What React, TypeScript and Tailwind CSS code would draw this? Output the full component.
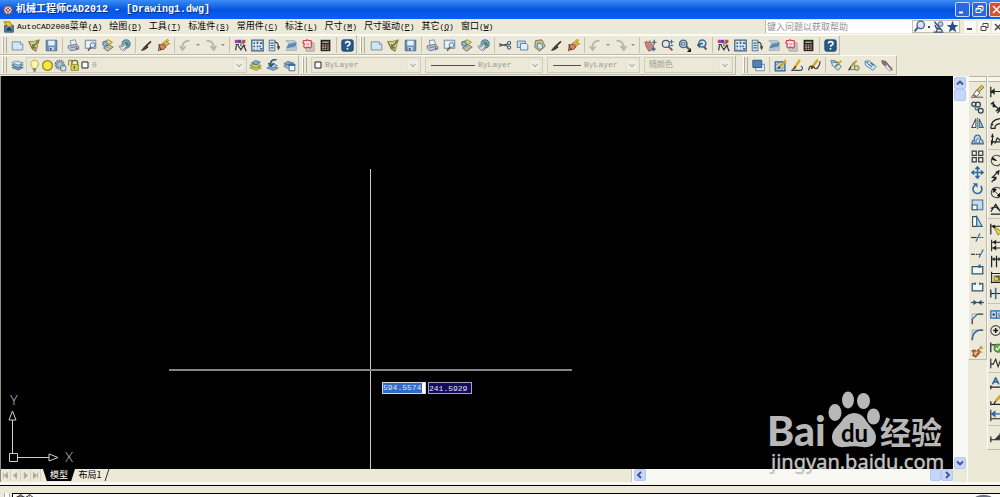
import React from "react";

interface MenuItem {
  name: string;
  latin?: string;
  hotkey: string;
}

const menus: MenuItem[] = [
  { latin: "AutoCAD2008", name: "菜单", hotkey: "A" },
  { name: "绘图", hotkey: "D" },
  { name: "工具", hotkey: "T" },
  { name: "标准件", hotkey: "S" },
  { name: "常用件", hotkey: "C" },
  { name: "标注", hotkey: "L" },
  { name: "尺寸", hotkey: "M" },
  { name: "尺寸驱动", hotkey: "P" },
  { name: "其它", hotkey: "Q" },
  { name: "窗口", hotkey: "W" },
];

// every icon is drawn on a 16x16 grid
const icons: Record<string, React.ReactNode> = {
  newFile: (
    <>
      <path d="M1.5 3.5h10l3 3v7h-13z" fill="#d3e5f5" stroke="#5d7f9e" />
      <path d="M11.5 3.5v3h3" fill="#fff" stroke="#5d7f9e" />
    </>
  ),
  open: (
    <>
      <path d="M1 3l6 0 7-2-2 6-2 8-5-3z" fill="#e0cb7c" stroke="#8a7a38" />
      <path d="M13 2L7 9M6 6v5h4" stroke="#3e6b42" strokeWidth="1.5" fill="none" />
      <path d="M1 3l4 9 5 3" stroke="#6c6440" fill="none" />
    </>
  ),
  save: (
    <>
      <path d="M1.500 1.500h13v13h-13z" fill="#6a93bd" stroke="#3c628a" />
      <path d="M4 2h8v6H4z" fill="#e6eef6" />
      <path d="M5 10h6v4H5z" fill="#c9d7e4" />
      <path d="M6 11h2v3H6z" fill="#2f4e70" />
    </>
  ),
  print: (
    <>
      <path d="M4 2l6-1 2 6-7 1z" fill="#eef3f8" stroke="#6d7d92" />
      <path d="M1.500 8.500l10-2 3 3v3l-10 2-3-3z" fill="#c0cad8" stroke="#56657c" />
      <path d="M4 11l9-2" stroke="#56657c" />
      <circle cx="12" cy="11.500" r="1" fill="#536" />
    </>
  ),
  preview: (
    <>
      <path d="M1.500 1.500h13v10h-13z" fill="#c8dcef" stroke="#5d7f9e" />
      <path d="M3 3h7v7H3z" fill="#edf5fc" />
      <circle cx="10.500" cy="7.500" r="3" fill="#dcecf8" stroke="#43688c" />
      <path d="M8.500 10L5 14.500" stroke="#7d5548" strokeWidth="2" />
    </>
  ),
  publish: (
    <>
      <path d="M2 4l7-3 5 3-6 4z" fill="#e9d66b" stroke="#8b7c32" />
      <circle cx="5" cy="6" r="3" fill="#8db5da" stroke="#3f678e" />
      <path d="M3 11l7-4 5 3-7 5z" fill="#b9cfe3" stroke="#44617f" />
      <path d="M5 12l5-3M9 13l5-4" stroke="#d1a631" strokeWidth="1.500" />
    </>
  ),
  globe: (
    <>
      <circle cx="10" cy="6" r="5" fill="#79a9d0" stroke="#3e648a" />
      <path d="M8 3l4 1 2 4-4 2z" fill="#4e8a62" />
      <path d="M1 9l7-3 3 3-6 5z" fill="#e3e7ea" stroke="#72808c" />
      <path d="M3 10l5-2M7 15l4-4" stroke="#59626c" />
    </>
  ),
  brush: (
    <>
      <path d="M13.500 3L7 9" stroke="#33302b" strokeWidth="2" />
      <path d="M8 8l2 2-4 3-4 1 3-4z" fill="#5a3c2c" stroke="#2f211a" />
    </>
  ),
  match: (
    <>
      <path d="M14 1L9 5l4 1-5 4" stroke="#8f6d16" strokeWidth="3" fill="none" />
      <path d="M14 1L9 5l4 1-5 4" stroke="#edc53a" strokeWidth="1.500" fill="none" />
      <path d="M2 7h6l3 3-3 3H5z" fill="#d98a6c" stroke="#703222" />
      <path d="M3 8l-1 7M5 11l-1 3" stroke="#703222" strokeWidth="1.500" />
    </>
  ),
  undo: (
    <path d="M13 2C7 2 4 5 4 11M1 8.500l3.500 5L8 9" fill="none" stroke="#b5b4ac" strokeWidth="2.200" />
  ),
  redo: (
    <path d="M3 2c6 0 9 3 9 9M8 8.500l4 5 3-5" fill="none" stroke="#b5b4ac" strokeWidth="2.200" />
  ),
  props: (
    <>
      <path d="M1 1h4v4H1z" fill="#c2359c" />
      <path d="M5 1h4v4H5z" fill="#4348b4" />
      <path d="M10 1h4v4h-4z" fill="#c74641" />
      <path d="M2 7h4M3 8l-1 6M5 8l4 6M8 8h6M12 8l-4 6M12 8l3 7" stroke="#33373d" strokeWidth="1.500" />
      <circle cx="10" cy="7" r="2" fill="#dca" stroke="#554" />
    </>
  ),
  design: (
    <>
      <path d="M1 1.500h14v13H1z" fill="#e2edf6" stroke="#355f86" strokeWidth="1.500" />
      <path d="M4 4v2M4 8v2M4 12v1M8 3v3M8 8v2M8 12v1M11 5h3M11 8v2M11 12h3" stroke="#355f86" strokeWidth="2" />
    </>
  ),
  palettes: (
    <>
      <path d="M1.500 1.500h7v13h-7z" fill="#dceaf5" stroke="#355f86" />
      <path d="M3 5h4M3 8h4M3 11h4" stroke="#355f86" strokeWidth="1.500" />
      <path d="M8 4c4-1 5 3 5 8" fill="none" stroke="#333e4c" strokeWidth="1.500" />
      <path d="M11 9l2 5 2-5z" fill="#333e4c" />
    </>
  ),
  sheets: (
    <>
      <path d="M1 2h11l2 3H4z" fill="#c2d4e2" stroke="#93aabb" />
      <path d="M4 6l10-2v5L1 12z" fill="#5e8bb2" />
      <path d="M1 14l13-5v5z" fill="#c3ced4" stroke="#9aabb7" />
    </>
  ),
  markup: (
    <>
      <path d="M5 5h10v10H5z" fill="#cdc6c0" stroke="#a3a1a0" />
      <path d="M2 2h3l1-1 2 1h3l1 2-1 2 1 3-2 2-3-1-3 1-2-2 1-3-2-1z" fill="#ffe8e6" stroke="#d24560" strokeWidth="1.500" />
      <path d="M5 5l4 3M9 5L5 8" stroke="#d9858b" />
    </>
  ),
  calc: (
    <>
      <path d="M2 1h12v14H2z" fill="#252322" />
      <path d="M4 3h8v2H4z" fill="#8eb37f" />
      <path d="M4 7.500h8M4 10h8M4 12.500h8" stroke="#e4e0d7" strokeWidth="1.300" strokeDasharray="2 1" />
      <path d="M10 7h2v6h-2z" fill="#a93d36" />
    </>
  ),
  help: (
    <>
      <rect x="1" y="1" width="14" height="14" rx="2" fill="#265a8d" stroke="#17395e" />
      <path d="M5.500 5.500C5.500 2.500 11 2.500 11 5.500c0 2-3 2-3 4" fill="none" stroke="#fff" strokeWidth="2" />
      <path d="M7 11h2v2H7z" fill="#fff" />
    </>
  ),
  cut: (
    <>
      <path d="M0 6l11 3M0 9l11-3" stroke="#444c55" strokeWidth="1.300" />
      <circle cx="12.500" cy="5" r="2" fill="none" stroke="#365a80" strokeWidth="1.300" />
      <circle cx="12.500" cy="10.500" r="2" fill="none" stroke="#365a80" strokeWidth="1.300" />
    </>
  ),
  copy: (
    <>
      <path d="M1.500 2.500h10v8h-10z" fill="#c9dcec" stroke="#4a7093" />
      <path d="M5.500 5.500h7l2 2v6h-9z" fill="#e2eef8" stroke="#4a7093" />
    </>
  ),
  paste: (
    <>
      <path d="M3 2l8-1 4 8-7 6-6-5z" fill="#c8be91" stroke="#70683e" />
      <path d="M6 5l5 1 1 4-3 3-4-3z" fill="#d5e6f3" stroke="#4d6d8b" />
    </>
  ),
  pan: (
    <>
      <path d="M1 4l3-1 1 2 2-3 3 5 2 1-1 5-5 2-3-5z" fill="#c08a84" stroke="#8b5d5c" />
      <path d="M12.500 1v6M9.500 4h6M12 10v5M9.500 12.500h5" stroke="#3f5c82" strokeWidth="1.500" />
    </>
  ),
  zoomRt: (
    <>
      <circle cx="6" cy="6" r="4.300" fill="#dcecf6" stroke="#47596a" strokeWidth="1.500" />
      <path d="M9 9l5 5" stroke="#865744" strokeWidth="2.500" />
      <path d="M13 1v5M10.500 3.500h5M11 8h4" stroke="#315f8e" strokeWidth="1.200" />
    </>
  ),
  zoomWin: (
    <>
      <circle cx="6.500" cy="6" r="4.500" fill="#dcecf6" stroke="#416e98" strokeWidth="2" />
      <path d="M4.500 4.500h4v3h-4z" fill="none" stroke="#3d4c5a" />
      <path d="M10 9l4 4" stroke="#735241" strokeWidth="2.500" />
      <path d="M16 11v5h-5z" fill="#111" />
    </>
  ),
  zoomPrev: (
    <>
      <circle cx="9" cy="5.500" r="4.300" fill="#dcecf6" stroke="#416e98" strokeWidth="2" />
      <path d="M11 9l3 4" stroke="#735241" strokeWidth="2.500" />
      <path d="M10 7C7 5 5 8 6 12L2 7l7-3z" fill="#2f5b83" />
    </>
  ),
  layers: (
    <>
      <path d="M1 10.500l5-2 9 2-6 3z" fill="#739dc2" stroke="#44698c" />
      <path d="M1 7.500l5-2 9 2-6 3z" fill="#a8c8e0" stroke="#44698c" />
      <path d="M1 4.500l5-2 9 2-6 3z" fill="#d9e9f5" stroke="#6589a8" />
    </>
  ),
  layerCurrent: (
    <>
      <path d="M1 11l5-2 9 2-6 3z" fill="#e0d04f" stroke="#8d8a32" />
      <path d="M1 8l5-2 9 2-6 3z" fill="#c9d663" stroke="#6f8341" />
      <path d="M3 5l5-3 6 2-5 3z" fill="#88aed0" stroke="#3f678c" />
    </>
  ),
  layerPrev: (
    <>
      <path d="M1 11l5-2 9 2-6 3z" fill="#89accd" stroke="#4c7294" />
      <path d="M3 8l5-2 6 2-5 3z" fill="#bed5e7" stroke="#4c7294" />
      <path d="M13 1C8 0 5 3 6 7M3 5l3 4 4-4" fill="none" stroke="#295581" strokeWidth="2" />
    </>
  ),
  layerStates: (
    <>
      <path d="M1 6l5-3 7 2-5 3z" fill="#7fa7ca" stroke="#44698c" />
      <path d="M1 9l5-2 5 2-4 3z" fill="#a9c7df" stroke="#44698c" />
      <path d="M7.500 6.500h7v8h-7z" fill="#f1f6fa" stroke="#2f5b83" />
      <path d="M7 6h8v2.500H7z" fill="#2f6ba0" />
    </>
  ),
  bulb: (
    <>
      <path d="M5 10C2 7 3 1.500 8 1.500S14 7 11 10l-1 2H6z" fill="#fff6a8" stroke="#b19a3a" />
      <path d="M6 12.500h4M6.500 14.500h3" stroke="#55617c" strokeWidth="1.500" />
    </>
  ),
  sun: <circle cx="8" cy="8" r="6" fill="#f2e93a" stroke="#8f8526" strokeWidth="1.500" />,
  freeze: (
    <>
      <circle cx="7" cy="7" r="4" fill="#a9c0cf" stroke="#557084" />
      <circle cx="7" cy="7" r="5.500" stroke="#557084" strokeWidth="1.500" strokeDasharray="2 1" />
      <path d="M8.500 8.500h6v6h-6z" fill="#d5e0e6" stroke="#557084" />
    </>
  ),
  lock: (
    <>
      <path d="M2 8V3c0-2 4-2 4 0v2" fill="none" stroke="#9b9423" strokeWidth="1.500" />
      <path d="M6 7V4c0-3 7-3 7 0v4" fill="none" stroke="#6c7520" strokeWidth="1.500" />
      <path d="M5 7h9v7H5z" fill="#d8d84a" stroke="#827c1c" />
      <path d="M9 9v3" stroke="#444" strokeWidth="1.500" />
    </>
  ),
  drawOrder: (
    <>
      <path d="M4.500 6.500h11v8h-11z" fill="#e7eef3" stroke="#5c7e9c" />
      <path d="M1 1.500h11v9H1z" fill="#4f82b2" stroke="#244f78" />
    </>
  ),
  editHatch: (
    <>
      <path d="M1.500 3.500h12v11h-12z" fill="#bcd4e7" stroke="#2e5d88" strokeWidth="1.500" />
      <path d="M2 8l5-4M2 13L12 4M8 14l5-5" stroke="#4e7ca3" />
      <path d="M14.500 1.500L7 10" stroke="#d5a52a" strokeWidth="3" />
      <path d="M7.500 9.500L5 12" stroke="#3c2f1c" strokeWidth="2" />
    </>
  ),
  editPline: (
    <>
      <path d="M4 11L1 14h10c4 0 4-5 1-5" fill="none" stroke="#454c52" strokeWidth="1.300" />
      <path d="M11 1L5 10" stroke="#d5a52a" strokeWidth="3" />
      <path d="M5.500 9L4 12" stroke="#3c2f1c" strokeWidth="2" />
    </>
  ),
  editSpline: (
    <>
      <path d="M1 14c0-7 5-6 7-3s6-1 7-8" fill="none" stroke="#393a3a" strokeWidth="1.500" />
      <path d="M12 1L6 9" stroke="#d5a52a" strokeWidth="3" />
      <path d="M6.500 8.500L4 12" stroke="#3c2f1c" strokeWidth="2" />
    </>
  ),
  attEdit: (
    <>
      <path d="M1 2h5l8 7-4 5-7-6z" fill="#cce0ef" stroke="#3d6990" />
      <path d="M14 2L8 8" stroke="#d5a52a" strokeWidth="2.500" />
      <path d="M3 4h7M6 10l4-4" stroke="#47725d" strokeWidth="1.500" />
    </>
  ),
  blockEdit: (
    <>
      <path d="M3 13l5-9 3 9z" fill="#d8e5ed" stroke="#3e6891" />
      <circle cx="12" cy="11" r="3" fill="#ddd27b" stroke="#586e3b" />
      <path d="M12 2L5 9" stroke="#c99a25" strokeWidth="2.500" />
      <path d="M5 9l-3 5" stroke="#3b3932" strokeWidth="1.500" />
    </>
  ),
  attSync: (
    <>
      <path d="M1 3l5-1 9 7-4 5-9-6z" fill="#d7e8f4" stroke="#3d739f" />
      <path d="M5 6l5 4M8 5l4 3" stroke="#3d739f" strokeWidth="1.500" />
      <circle cx="4" cy="4.500" r="1" fill="#244b70" />
    </>
  ),
  attExtract: (
    <>
      <path d="M1 2l5 1 3 4-3 2-4-3z" fill="#996e68" stroke="#674944" />
      <path d="M7 6l7 5-3 4-6-5z" fill="#e2e9ee" stroke="#7795a9" />
      <path d="M8 7l6 7" stroke="#8d5344" strokeWidth="1.500" />
    </>
  ),
  erase: (
    <>
      <path d="M15 1L8 8" stroke="#76652c" strokeWidth="4.500" />
      <path d="M15 1L8 8" stroke="#e0c766" strokeWidth="2.800" />
      <path d="M7 6l4 4-4 4-5-1z" fill="#f3f5f6" stroke="#45484b" />
      <path d="M3 12l3 2" stroke="#bd5d52" strokeWidth="2" />
      <path d="M0 15h15" stroke="#30363b" />
    </>
  ),
  copyObj: (
    <g fill="none" stroke="#31414f" strokeWidth="1.500">
      <circle cx="3.500" cy="4" r="2.500" />
      <circle cx="8.500" cy="4.500" r="3" />
      <circle cx="7" cy="9" r="2" stroke="#3e72a3" />
      <circle cx="12" cy="12" r="3" />
    </g>
  ),
  mirror: (
    <>
      <path d="M6 2v11H1z" fill="#fff" stroke="#3b4b59" strokeWidth="1.300" />
      <path d="M10 2v11h5z" fill="#9fc0dc" stroke="#2f5f8d" strokeWidth="1.300" />
      <path d="M8 1v14" stroke="#3d4751" strokeDasharray="2 1" />
    </>
  ),
  offset: (
    <>
      <path d="M1 13.500C1 10 2 9 4 9c-1-8 8-9 8-1 2 0 3 2 3 5.500z" fill="#bed5e7" stroke="#336492" strokeWidth="1.500" />
      <path d="M4 12c0-1 1-2 3-2-1-4 3-4 3-1l1 3z" fill="#eee" stroke="#336492" />
    </>
  ),
  array: (
    <path d="M1.500 1.500h5v5h-5zM9.500 1.500h5v5h-5zM1.500 9.500h5v5h-5zM9.500 9.500h5v5h-5z" fill="#f5f5ef" stroke="#333d46" strokeWidth="1.500" />
  ),
  move: (
    <path d="M8 1v14M1 8h14M5.500 4L8 1l2.500 3M5.500 12L8 15l2.500-3M4 5.500L1 8l3 2.500M12 5.500L15 8l-3 2.500" fill="none" stroke="#3269a0" strokeWidth="1.800" />
  ),
  rotate: (
    <>
      <path d="M5 4a5.500 5.500 0 1 0 7 1" fill="none" stroke="#3269a0" strokeWidth="2" />
      <path d="M2 1.500h6v5.500z" fill="#3269a0" />
    </>
  ),
  scale: (
    <>
      <path d="M1.500 2.500h13v12h-13z" fill="#c7dceb" stroke="#3e719f" strokeWidth="1.300" />
      <path d="M1.500 8.500h6v6h-6z" fill="#fff" stroke="#2e5578" strokeWidth="1.300" />
    </>
  ),
  stretch: (
    <>
      <path d="M2 2h5v12H2z" fill="#fff" stroke="#31475b" strokeWidth="1.300" />
      <path d="M7 2l7 12H7z" fill="#b9d1e5" stroke="#3269a0" strokeWidth="1.300" />
    </>
  ),
  trim: (
    <>
      <path d="M0 8h7" stroke="#36393c" strokeWidth="1.500" />
      <path d="M10 8h6" stroke="#36393c" strokeWidth="1.500" strokeDasharray="2 1" />
      <path d="M11 3L6 13" stroke="#3269a0" strokeWidth="1.500" />
    </>
  ),
  extend: (
    <>
      <path d="M0 9h5" stroke="#36393c" strokeWidth="1.500" />
      <path d="M6 9h5" stroke="#36393c" strokeWidth="1.500" strokeDasharray="2 1" />
      <path d="M15 3l-5 10" stroke="#3269a0" strokeWidth="1.500" />
    </>
  ),
  breakPoint: (
    <>
      <path d="M1.500 4.500h13v9h-13z" fill="#f7f7f2" stroke="#2f5173" strokeWidth="1.500" />
      <path d="M9 2h3v4H9z" fill="#3269a0" />
    </>
  ),
  breakObj: (
    <>
      <path d="M5 4.500H1.500v9h13v-9H11" fill="#f7f7f2" stroke="#2f5173" strokeWidth="1.500" />
      <path d="M4 3h2v3H4zM10 3h2v3h-2z" fill="#3269a0" />
    </>
  ),
  join: (
    <>
      <path d="M0 8h16" stroke="#3c5268" strokeWidth="1.500" />
      <path d="M3 4.500L7.500 8 3 11.500zM13 4.500L8.500 8l4.500 3.500z" fill="#25527d" />
    </>
  ),
  chamfer: (
    <>
      <path d="M1.500 15V8M8 2.500h7" stroke="#30363b" strokeWidth="1.500" />
      <path d="M1.500 8V2.500H8" stroke="#91999f" fill="none" />
      <path d="M1.500 9L8 2.500" stroke="#3269a0" strokeWidth="1.500" />
    </>
  ),
  fillet: (
    <>
      <path d="M1.500 15v-3M11 2.500h4" stroke="#30363b" strokeWidth="1.500" />
      <path d="M1.500 12V2.500H11" stroke="#91999f" fill="none" />
      <path d="M1.500 14C2 7 5 3 12 2.500" stroke="#3269a0" strokeWidth="2" fill="none" />
    </>
  ),
  explode: (
    <>
      <path d="M1 7l4-1 2 2 2-3 2 4-2 3-3 3-4-2 1-3z" fill="#cb6238" stroke="#83371f" />
      <path d="M10 6l4-4M12 1l1 4M10 3l5 1M11 8l3 1" stroke="#c99b34" strokeWidth="1.500" />
      <path d="M4 9l2 3M8 8l-2 2" stroke="#f6e0b0" strokeWidth="1.500" />
    </>
  ),
  dimLinear: <path d="M1 2v13M16 2v13M2 8h14M5 5.500L2 8l3 2.500z" stroke="#1d2226" strokeWidth="1.500" />,
  dimAligned: (
    <path d="M1 4l4-3M3 3l10 9M9 15l5-5M4 3v4h3zM12 12H8l4-4z" stroke="#1d2226" strokeWidth="1.500" />
  ),
  dimArc: (
    <path d="M1 14C1 6 5 2 15 2M6 14c0-4 3-6 9-6M1 14h6M2 9l2 1" fill="none" stroke="#1d2226" strokeWidth="1.500" />
  ),
  dimOrd: (
    <path d="M3 1v12M1 11h14M6 13l3-7 6 5M1 4h4M2 9v6" fill="none" stroke="#1d2226" strokeWidth="1.500" />
  ),
  dimRadius: (
    <>
      <circle cx="8" cy="8" r="6.500" fill="none" stroke="#454a4e" strokeWidth="1.300" />
      <path d="M8 8L3 4v3z" fill="#111" stroke="#111" />
    </>
  ),
  dimJog: (
    <path d="M2 15l5-6H3l7-7M7 3l4-2-1 5M5 13l3-3" fill="none" stroke="#1d2226" strokeWidth="1.500" />
  ),
  dimDia: (
    <>
      <circle cx="8" cy="8" r="6.500" fill="none" stroke="#454a4e" strokeWidth="1.300" />
      <path d="M3 4l10 9M4 3v5l4-4zM12 13V9l-3 3z" stroke="#111" fill="#111" />
    </>
  ),
  dimAngle: <path d="M1 12L7 3l8 12H1M1 8c4-3 8-2 10 2" fill="none" stroke="#1d2226" strokeWidth="1.500" />,
  dimQuick: (
    <>
      <path d="M1 1v13M1 4h13" stroke="#1d2226" strokeWidth="1.500" />
      <path d="M4 3l10 8-4 4z" fill="#e9dc43" stroke="#6d6b21" />
      <path d="M2 4l4-2v5z" fill="#111" />
    </>
  ),
  dimBase: <path d="M2 1v14M14 1v14M2 4h12M2 11h12M4 4l3-2v4zM4 11l3-2v4z" fill="none" stroke="#1d2226" strokeWidth="1.300" />,
  dimCont: <path d="M2 1v14M8 1v14M14 1v14M2 5h12M5 3v4M11 3v4" fill="none" stroke="#1d2226" strokeWidth="1.500" />,
  dimSpace: (
    <>
      <path d="M5 6h9v6H5z" fill="#dccf55" stroke="#766f26" />
      <path d="M2 1v14M1 3h14M1 14h14M7 7h4v4" fill="none" stroke="#1d2226" strokeWidth="1.300" />
    </>
  ),
  dimBreak: (
    <>
      <path d="M1 3v10M1 8h15" stroke="#1d2226" strokeWidth="1.500" />
      <path d="M7 1v14" stroke="#3269a0" strokeWidth="2" />
    </>
  ),
  tolerance: (
    <>
      <path d="M1 3.500h15v9H1zM8 4v8" fill="#c9dcec" stroke="#3269a0" strokeWidth="1.500" />
      <circle cx="4.500" cy="8" r="1.500" fill="#244f7b" />
      <path d="M11 6v4h3" stroke="#244f7b" fill="none" />
    </>
  ),
  center: (
    <>
      <circle cx="7" cy="8" r="6" fill="none" stroke="#424549" strokeWidth="1.300" />
      <path d="M7 5v6M4 8h6" stroke="#111" strokeWidth="1.800" />
    </>
  ),
  inspect: (
    <>
      <path d="M1 3v12M2 6h14" stroke="#1d2226" strokeWidth="1.500" />
      <circle cx="10" cy="10" r="5" fill="#62ae43" stroke="#376a2a" />
      <path d="M7 10l2 2 4-5" fill="none" stroke="#fff" strokeWidth="1.500" />
    </>
  ),
  jogLine: <path d="M1 3v12M1 10h3l3-6 3 9 3-8 2 4M14 3v10" fill="none" stroke="#1d2226" strokeWidth="1.300" />,
  dimEdit: (
    <>
      <path d="M3 9L7 1l4 8M4.500 6h5" fill="none" stroke="#3269a0" strokeWidth="2" />
      <path d="M1 10v5M1 12.500h15" stroke="#1d2226" strokeWidth="1.500" />
    </>
  ),
  dimTextEdit: (
    <>
      <path d="M15 1L7 10" stroke="#d5a52a" strokeWidth="3.500" />
      <path d="M7 10l-2 3M1 10v5M1 14h15" stroke="#1d2226" strokeWidth="1.500" />
    </>
  ),
  dimUpdate: (
    <>
      <path d="M1 1v14M14 1v14M1 12h14" stroke="#1d2226" strokeWidth="1.300" />
      <path d="M2 6h12M6 3L2 6l4 3z" stroke="#3269a0" strokeWidth="1.500" fill="#3269a0" />
    </>
  ),
  dimStyle: (
    <>
      <path d="M1 8v7M1 12h15" stroke="#1d2226" strokeWidth="1.500" />
      <path d="M5 12l7-7 3 3-4 4z" fill="#373a3a" />
      <path d="M12 5l4-4" stroke="#555" strokeWidth="2" />
    </>
  ),
  searchHelp: (
    <>
      <circle cx="9.500" cy="6" r="4.500" fill="#d7e6f5" stroke="#3d5f92" strokeWidth="1.500" />
      <path d="M6 9l-4 5" stroke="#3d5f92" strokeWidth="2.500" />
    </>
  ),
  comm: (
    <>
      <path d="M3 2l5 6 5 6M4 6a5 5 0 0 0 6 5" fill="none" stroke="#36507a" strokeWidth="1.800" />
      <circle cx="10.500" cy="5" r="3" fill="#b8cbe4" stroke="#36507a" />
      <path d="M2 15h12M5 15l2-5" stroke="#36507a" strokeWidth="1.500" />
    </>
  ),
  star: <path d="M8 1l2 5h5l-4 3.500 1.500 5.500L8 12l-4.500 3L5 9.500 1 6h5z" fill="#294d84" />,
};

const Icon: React.FC<{ name: string }> = ({ name }) => (
  <svg viewBox="0 0 16 16" className="block size-[13px]" fill="none">
    {icons[name]}
  </svg>
);

const ToolButton: React.FC<{ name: string }> = ({ name }) => (
  <button aria-label={name} className="flex h-4 w-[17px] shrink-0 items-center justify-center">
    <Icon name={name} />
  </button>
);

const Separator = () => <div className="mx-[2px] h-4 w-px shrink-0 bg-[#c5c2b2]" />;

const Grip = () => (
  <div className="mr-[2px] flex h-full w-[7px] shrink-0 gap-[2px] py-px pl-[2px]">
    <div className="w-[2px] border-r border-[#b0ad9e] bg-white" />
    <div className="w-[2px] border-r border-[#b0ad9e] bg-white" />
  </div>
);

const Toolbar: React.FC<{ children: React.ReactNode }> = ({ children }) => (
  <div className="flex h-5 shrink-0 items-center border-t border-r border-b border-[#bdbaab] border-t-[#fbfaf5]">
    <Grip />
    {children}
  </div>
);

// undo / redo with its little history arrow
const HistoryButton: React.FC<{ name: string }> = ({ name }) => (
  <div className="flex items-center">
    <ToolButton name={name} />
    <button aria-label={name + " list"} className="flex w-2 justify-center">
      <svg viewBox="0 0 4 2" className="h-[2px] w-1">
        <path d="M0 0h4L2 2z" fill="#8f8e86" />
      </svg>
    </button>
  </div>
);

const Tools: React.FC<{ names: string[] }> = ({ names }) => (
  <>
    {names.map((n) => (
      <ToolButton key={n} name={n} />
    ))}
  </>
);

interface ComboProps {
  label: string;
  value: string;
  width: string;
  children?: React.ReactNode;
}

const Combo: React.FC<ComboProps> = ({ label, value, width, children }) => (
  <div className={"relative flex h-4 shrink-0 items-center border border-[#d0cdbd] bg-[#ebe8d8] pl-px " + width}>
    {children}
    <select
      aria-label={label}
      className="h-full min-w-0 flex-1 appearance-none bg-transparent pl-[3px] font-['Liberation_Mono','Noto_Sans_CJK_SC',monospace] text-[8px] leading-[14px] text-[#9c9a8b] outline-none"
    >
      <option>{value}</option>
    </select>
    <svg viewBox="0 0 12 12" className="pointer-events-none absolute right-px size-3">
      <rect width="12" height="12" rx="1" fill="#f0eee3" stroke="#dcd9cb" />
      <path d="M3.500 5L6 7.500 8.500 5" fill="none" stroke="#b9b7a7" strokeWidth="1.300" />
    </svg>
  </div>
);

const Swatch = () => (
  <svg viewBox="0 0 8 8" className="ml-px size-2">
    <path d="M1 1h6v6H1z" fill="#fff" stroke="#222" />
  </svg>
);

const TitleBar = () => (
  <div className="flex h-[19px] shrink-0 items-center bg-linear-to-b from-[#3a8cf5] via-[#0455e0] to-[#0a5ff5] pl-[2px]">
    <svg viewBox="0 0 16 16" className="size-3 shrink-0">
      <circle cx="8" cy="8" r="6" fill="#cdbcc4" stroke="#574c70" strokeWidth="2.500" strokeDasharray="3 1" />
      <circle cx="8" cy="8" r="3" fill="#a73b41" />
      <path d="M5 5l6 6M11 5l-6 6" stroke="#fff" />
    </svg>
    <h1 className="ml-[2px] flex-1 font-['Liberation_Mono','Noto_Sans_CJK_SC',monospace] text-[10px] leading-[18px] font-bold whitespace-pre text-white [text-shadow:1px_1px_0_#0a2f80]">
      机械工程师CAD2012 - [Drawing1.dwg]
    </h1>
    <div className="-mr-1 flex gap-[2px]">
      <button aria-label="Minimize" className="size-[15px] rounded-[2px] border border-[#c8dcff] bg-[#2e66dd]">
        <svg viewBox="0 0 13 13"><path d="M3 9.500h4" stroke="#fff" strokeWidth="2" /></svg>
      </button>
      <button aria-label="Restore" className="size-[15px] rounded-[2px] border border-[#c8dcff] bg-[#2e66dd]">
        <svg viewBox="0 0 13 13" fill="none" stroke="#fff">
          <path d="M5 5V3.500h5v4H8.500M5 3h5M3 5.500h5v4H3zM3 6h5" />
        </svg>
      </button>
      <button aria-label="Close" className="size-[15px] rounded-[2px] border border-[#f3d5cb] bg-[#d9502f]">
        <svg viewBox="0 0 13 13"><path d="M3 3l7 7M10 3l-7 7" stroke="#fff" strokeWidth="1.500" /></svg>
      </button>
    </div>
  </div>
);

const MenuBar = () => (
  <div className="flex h-4 shrink-0 items-center border-b border-[#fbfaf5] pl-[3px]">
    <svg viewBox="0 0 14 14" className="size-3 shrink-0">
      <path d="M2 5h10v8H2z" fill="#5386bb" stroke="#24425f" />
      <path d="M1 1h7l3 5-5 1z" fill="#e9ca3c" stroke="#8b7220" />
      <path d="M3 11l4-4 4 4z" fill="#1f3244" />
    </svg>
    <nav className="flex flex-1 gap-[7px] pl-[2px]">
      {menus.map((m) => (
        <button key={m.name} className="flex shrink-0 items-baseline font-['Liberation_Mono','Noto_Sans_CJK_SC',monospace] text-[8px] leading-[14px] whitespace-nowrap text-black">
          {m.latin}
          <span className="text-[9px]">{m.name}</span>
          (<u>{m.hotkey}</u>)
        </button>
      ))}
    </nav>
    <input
      aria-label="Help search"
      placeholder="键入问题以获取帮助"
      className="h-[13px] w-[147px] shrink-0 border-l border-[#bdbaab] bg-white px-px font-['Noto_Sans_CJK_SC',sans-serif] text-[9px] leading-[13px] outline-none placeholder:text-[#8f8f8f]"
    />
    <div className="mr-1 flex h-[13px] shrink-0 items-center gap-px border border-[#c5c2b2] bg-[#f8f8f4]">
      <button aria-label="Search"><Icon name="searchHelp" /></button>
      <span className="mx-px size-[2px] bg-[#444]" />
      <button aria-label="Communication center"><Icon name="comm" /></button>
      <button aria-label="Favorites"><Icon name="star" /></button>
    </div>
    <div className="-mr-1 flex shrink-0 gap-[2px]">
      <button aria-label="Minimize drawing" className="size-3 bg-[#fbfaf6]">
        <svg viewBox="0 0 12 12"><path d="M3 8h5" stroke="#444" strokeWidth="2" /></svg>
      </button>
      <button aria-label="Restore drawing" className="size-3 bg-[#fbfaf6]">
        <svg viewBox="0 0 12 12" fill="none" stroke="#444">
          <path d="M5 4.500v-2h5v4H8M3 5.500h5v4H3z" />
        </svg>
      </button>
      <button aria-label="Close drawing" className="size-3 bg-[#fbfaf6]">
        <svg viewBox="0 0 12 12"><path d="M3 3l6 6M9 3L3 9" stroke="#444" strokeWidth="1.500" /></svg>
      </button>
    </div>
  </div>
);

const ScrollButton: React.FC<{ label: string; d: string }> = ({ label, d }) => (
  <button aria-label={label} className="size-3 shrink-0 rounded-[2px] border border-[#b4c8f0] bg-[#c6d6fb]">
    <svg viewBox="0 0 10 10">
      <path d={d} fill="none" stroke="#3d5487" strokeWidth="1.800" />
    </svg>
  </button>
);

const VerticalTools: React.FC<{ groups: string[][]; className: string }> = ({ groups, className }) => (
  <div className={"flex shrink-0 flex-col border-r border-b border-l border-[#bdbaab] border-l-[#fbfaf5] " + className}>
    <div className="mb-px h-[6px] shrink-0 border-y border-[#b9b6a7] bg-[#f7f5ec]" />
    {groups.map((g, i) => (
      <div key={i} className={"flex flex-col justify-between " + (groups.length === 1 ? "flex-1" : "") + (i > 0 ? " mt-[2px] border-t border-[#c5c2b2] pt-[2px]" : "")}>
        <Tools names={g} />
      </div>
    ))}
  </div>
);

const Watermark = () => (
  <svg viewBox="0 0 184 92" className="pointer-events-none absolute right-0 -bottom-3 h-[92px] w-[184px]" fill="#b7b7b7">
    <text x="-2" y="57" fontSize="41" fontWeight="900" fontFamily="Lato, sans-serif">Bai</text>
    <ellipse cx="66" cy="23.500" rx="6.500" ry="8.500" />
    <ellipse cx="79" cy="11" rx="6" ry="8.500" />
    <ellipse cx="94.500" cy="12" rx="6.500" ry="8" />
    <ellipse cx="104.500" cy="27.500" rx="6.500" ry="8" />
    <path d="M74 30c6-8 17-8 22 0 3 6 11 11 11 18 0 8-6 11-13 10-7-1-12-1-18 0-8 1-13-3-13-10 0-8 8-12 11-18z" />
    <text x="72" y="53" fontSize="24" fontWeight="bold" fontFamily="Lato, sans-serif" fill="#000">du</text>
    <text x="111" y="55" fontSize="31" fontWeight="bold" fontFamily="Noto Sans CJK SC, sans-serif">经验</text>
    <text x="2" y="80" fontSize="20" fontFamily="Noto Sans, sans-serif" fill="#c4c4c4" stroke="#c4c4c4" strokeWidth="0.400">
      jingyan.baidu.com
    </text>
  </svg>
);

const Canvas = () => (
  <div className="relative min-w-0 flex-1 border-l border-[#8f8d80] bg-black">
    <svg className="absolute inset-0 size-full">
      <path d="M369.500 93V1000" stroke="#c9c9c9" />
      <path d="M168 294H571" stroke="#858585" strokeWidth="2" />
    </svg>

    <svg viewBox="0 0 80 76" className="absolute bottom-0 left-0 h-[76px] w-20" fill="none" stroke="#d0d0d0">
      <path d="M11.500 60V27M16 64.500H48M8.500 60.500h8v8h-8z" />
      <path d="M11.500 18l-3.500 9h7zM57 64.500l-9-3.500v7z" />
      <text x="9" y="12" fontSize="13" fontFamily="Lato, sans-serif" fontWeight="300" fill="#d0d0d0" stroke="none">Y</text>
      <text x="64" y="69" fontSize="13" fontFamily="Lato, sans-serif" fontWeight="300" fill="#d0d0d0" stroke="none">X</text>
    </svg>

    <div className="absolute top-[306px] left-[381px] flex gap-[2px] font-['Liberation_Mono',monospace] text-[8px] text-[#dfe3f0]">
      <div className="flex h-3 w-11 items-center border border-[#d8d8d8] bg-white">
        <input aria-label="X coordinate" defaultValue="594.5574" className="h-[10px] w-[39px] bg-[#316ac5] leading-[10px] outline-none" />
      </div>
      <input aria-label="Y coordinate" defaultValue="241.5929" className="h-3 w-11 border border-[#a5a5b8] bg-[#140a5c] leading-[10px] outline-none" />
    </div>

    <Watermark />
  </div>
);

const TabRow = () => (
  <div className="flex h-[13px] shrink-0">
    <div className="flex min-w-0 flex-1 border-l border-[#8f8d80]">
      {["M3 2v7M8 2L4 5.500 8 9z", "M7 2L3 5.500 7 9z", "M4 2l4 3.500L4 9z", "M8 2v7M3 2l4 3.500L3 9z"].map((d, i) => (
        <button key={i} aria-label="Scroll tabs" className="h-3 w-[10px] border-r border-[#d5d2c4]">
          <svg viewBox="0 0 11 11" className="size-[9px]">
            <path d={d} fill="#aaa899" stroke="#aaa899" />
          </svg>
        </button>
      ))}
      <button className="ml-[2px] h-3 w-8 bg-black font-['Noto_Sans_CJK_SC',sans-serif] text-[9px] leading-3 text-white [clip-path:polygon(0_0,100%_0,88%_100%,12%_100%)]">
        模型
      </button>
      <button className="ml-px h-3 w-7 font-['Noto_Sans_CJK_SC',sans-serif] text-[9px] leading-3 whitespace-nowrap text-black">
        布局1
      </button>
      <svg viewBox="0 0 6 12" className="h-3 w-[6px]">
        <path d="M1 12L5 0" stroke="#333" />
      </svg>
    </div>
    <div className="flex w-[322px] shrink-0 border-l border-[#c5c2b2] bg-[#f9f9f4] pl-[2px]">
      <ScrollButton label="Scroll left" d="M6 2L3 5l3 3" />
      <div className="flex-1" />
      <button aria-label="Horizontal thumb" className="h-3 w-[11px] shrink-0 rounded-[2px] border border-[#b4c8f0] bg-[#c6d6fb]" />
      <ScrollButton label="Scroll right" d="M4 2l3 3-3 3" />
    </div>
  </div>
);

const modifyTools = [[
  "erase", "copyObj", "mirror", "offset", "array", "move", "rotate", "scale", "stretch",
  "trim", "extend", "breakPoint", "breakObj", "join", "chamfer", "fillet", "explode",
]];

const dimTools = [
  ["dimLinear", "dimAligned", "dimArc", "dimOrd"],
  ["dimRadius", "dimJog", "dimDia", "dimAngle"],
  ["dimQuick", "dimBase", "dimCont", "dimSpace", "dimBreak"],
  ["tolerance", "center", "inspect", "jogLine"],
  ["dimEdit", "dimTextEdit", "dimUpdate"],
  ["dimStyle"],
];

const App = () => {
  return (
    <div className="flex h-screen w-full flex-col overflow-hidden bg-[#ece9d8]">
      <TitleBar />
      <MenuBar />

      <div className="flex shrink-0 gap-px">
        <Toolbar>
          <Tools names={["newFile", "open", "save"]} />
          <Separator />
          <Tools names={["print", "preview", "publish", "globe"]} />
          <Separator />
          <Tools names={["brush", "match"]} />
          <Separator />
          <HistoryButton name="undo" />
          <HistoryButton name="redo" />
          <Separator />
          <Tools names={["props", "design", "palettes", "sheets", "markup", "calc"]} />
          <Separator />
          <Tools names={["help"]} />
        </Toolbar>
        <Toolbar>
          <div className="w-px" />
          <Tools names={["newFile", "open", "save"]} />
          <Separator />
          <Tools names={["print", "preview", "publish", "globe"]} />
          <Separator />
          <Tools names={["cut", "copy", "paste", "brush", "match"]} />
          <Separator />
          <HistoryButton name="undo" />
          <HistoryButton name="redo" />
          <Separator />
          <Tools names={["pan", "zoomRt", "zoomWin", "zoomPrev"]} />
          <Separator />
          <Tools names={["props", "design", "palettes", "sheets", "markup", "calc"]} />
          <Separator />
          <Tools names={["help"]} />
        </Toolbar>
      </div>

      <div className="flex shrink-0 gap-px">
        <Toolbar>
          <Tools names={["layers"]} />
          <Combo label="Layer" value="0" width="w-[221px]">
            <div className="flex">
              {["bulb", "sun", "freeze", "lock"].map((n) => (
                <Icon key={n} name={n} />
              ))}
            </div>
            <Swatch />
          </Combo>
          <Tools names={["layerCurrent", "layerPrev", "layerStates"]} />
        </Toolbar>
        <Toolbar>
          <div className="flex gap-1 px-[2px]">
            <Combo label="Color" value="ByLayer" width="w-[110px]">
              <Swatch />
            </Combo>
            <Combo label="Linetype" value="ByLayer" width="w-[118px]">
              <div className="ml-1 h-px w-11 bg-[#55544c]" />
            </Combo>
            <Combo label="Lineweight" value="ByLayer" width="w-[93px]">
              <div className="ml-1 h-px w-7 bg-[#55544c]" />
            </Combo>
            <Combo label="Plot style" value="随颜色" width="w-[89px]" />
          </div>
        </Toolbar>
        <div className="ml-1">
          <Toolbar>
            <Tools names={["drawOrder"]} />
            <Separator />
            <Tools names={["editHatch", "editPline", "editSpline"]} />
            <Separator />
            <Tools names={["attEdit", "blockEdit", "attSync", "attExtract"]} />
          </Toolbar>
        </div>
      </div>

      <div className="mt-px flex min-h-0 flex-1">
        <div className="flex min-w-0 flex-1 flex-col">
          <div className="flex min-h-0 flex-1">
            <Canvas />
            <div className="flex w-[14px] shrink-0 flex-col items-center bg-[#f9f9f4] pt-px">
              <ScrollButton label="Scroll up" d="M2 6.500l3-3 3 3" />
              <button aria-label="Vertical thumb" className="size-3 rounded-[2px] border border-[#b4c8f0] bg-[#c6d6fb]" />
              <div className="flex-1" />
              <ScrollButton label="Scroll down" d="M2 3.500l3 3 3-3" />
            </div>
          </div>
          <div className="mr-[14px]">
            <TabRow />
          </div>
        </div>
        <div className="flex shrink-0 items-start border-l border-[#fbfaf5]">
          <VerticalTools groups={modifyTools} className="h-[284px] w-[19px]" />
          <div className="w-[13px] overflow-hidden">
            <VerticalTools groups={dimTools} className="h-[374px] w-5" />
          </div>
        </div>
      </div>

      {/* command line */}
      <div className="shrink-0 border-t-[3px] border-[#f8f7f0]">
        <div className="h-2 border-t border-black" />
        <div className="flex h-1 overflow-hidden">
          <div className="mr-[2px] ml-1 w-[6px] border-x border-[#b0ad9e] bg-white" />
          <label htmlFor="command" className="border-t border-l border-black bg-white pl-[3px] font-['Noto_Sans_CJK_SC',sans-serif] text-[9px] leading-[10px] text-black">
            命令
          </label>
          <input id="command" className="min-w-0 flex-1 border-t border-black bg-white outline-none" />
          <svg viewBox="0 0 30 4" className="h-1 w-[30px] border-t border-black bg-white">
            <ellipse cx="13" cy="8" rx="13" ry="7" fill="#6c6f80" />
          </svg>
        </div>
      </div>
    </div>
  );
};

export default App;
